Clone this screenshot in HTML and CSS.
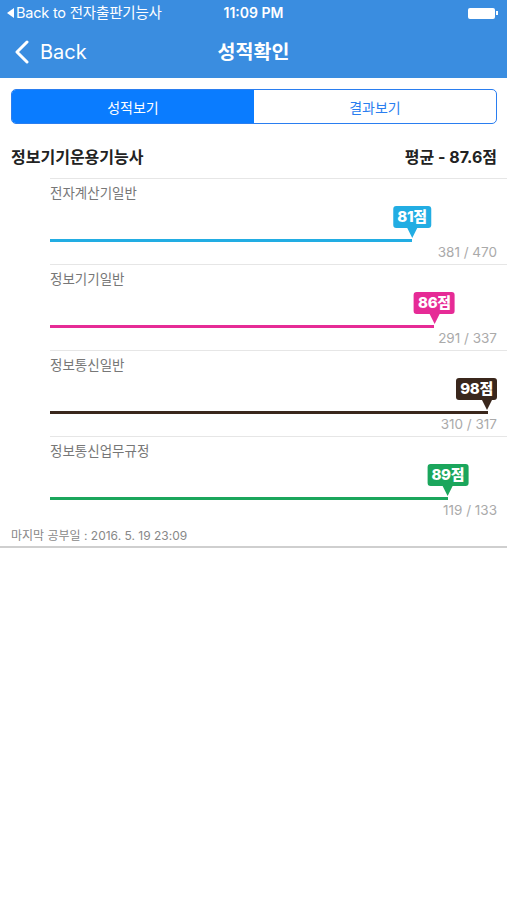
FILE: index.html
```html
<!DOCTYPE html>
<html lang="ko">
<head>
    <meta charset="UTF-8">
    <meta name="viewport" content="width=device-width, initial-scale=1.0">
    <title>성적확인</title>
    <link rel="stylesheet" href="styles.css">
</head>
<body>
    <div class="top">
        <div class="status">
            <div class="status-left"><span class="tri"></span>Back to 전자출판기능사</div>
            <div class="status-time">11:09 PM</div>
            <div class="status-right"><span class="battery"></span><span class="nub"></span></div>
        </div>
        <div class="nav">
            <div class="back">
                <svg width="16" height="24" viewBox="0 0 16 24"><path d="M13 2 L3 12 L13 22" fill="none" stroke="#fff" stroke-width="3" stroke-linecap="round" stroke-linejoin="round"/></svg>
                <span>Back</span>
            </div>
            <div class="title">성적확인</div>
        </div>
    </div>

    <div class="seg">
        <div class="seg-item on">성적보기</div>
        <div class="seg-item">결과보기</div>
    </div>

    <div class="head">
        <div class="head-name">정보기기운용기능사</div>
        <div class="head-avg">평균 - 87.6점</div>
    </div>

    <ul class="list">
        <li class="item c-blue">
            <div class="label">전자계산기일반</div>
            <div class="chart">
                <div class="tip" style="left:81%">81점</div>
                <div class="bar" style="width:81%"></div>
            </div>
            <div class="count">381 / 470</div>
        </li>
        <li class="item c-pink">
            <div class="label">정보기기일반</div>
            <div class="chart">
                <div class="tip" style="left:86%">86점</div>
                <div class="bar" style="width:86%"></div>
            </div>
            <div class="count">291 / 337</div>
        </li>
        <li class="item c-brown">
            <div class="label">정보통신일반</div>
            <div class="chart">
                <div class="tip end">98점</div>
                <div class="bar" style="width:98%"></div>
            </div>
            <div class="count">310 / 317</div>
        </li>
        <li class="item c-green">
            <div class="label">정보통신업무규정</div>
            <div class="chart">
                <div class="tip" style="left:89%">89점</div>
                <div class="bar" style="width:89%"></div>
            </div>
            <div class="count">119 / 133</div>
        </li>
    </ul>

    <div class="foot">마지막 공부일 : 2016. 5. 19 23:09</div>
</body>
</html>
```

FILE: styles.css
```css
*{
    margin:0;
    padding:0;
    list-style:none;
    box-sizing:border-box;
}
body{
    font-family:Inter, "Noto Sans CJK KR", sans-serif;
    background:#fff;
    color:#222;
}
/* 상단 파란 영역 */
.top{
    background:#3a8de0;
    color:#fff;
    height:78px;
}
.status{
    display:flex;
    align-items:center;
    justify-content:space-between;
    height:26px;
    padding:0 9px 0 7px;
    font-size:14.5px;
    line-height:18px;
    position:relative;
}
.status-left{
    display:flex;
    align-items:center;
    letter-spacing:-.2px;
}
.tri{
    width:0;
    height:0;
    border-top:5px solid transparent;
    border-bottom:5px solid transparent;
    border-right:7px solid #fff;
    margin-right:2px;
}
.status-time{
    position:absolute;
    left:0;
    right:0;
    text-align:center;
    font-weight:600;
    font-size:14px;
}
.status-right{
    display:flex;
    align-items:center;
}
.battery{
    width:27px;
    height:11px;
    background:#fff;
    border-radius:2px;
}
.nub{
    width:2px;
    height:4px;
    background:#fff;
    margin-left:1px;
}
.nav{
    height:52px;
    display:flex;
    align-items:center;
    position:relative;
}
.back{
    display:flex;
    align-items:center;
    padding-left:14px;
    font-size:20px;
    line-height:24px;
}
.back svg{
    margin-right:10px;
}
.title{
    position:absolute;
    left:0;
    right:0;
    text-align:center;
    font-size:19.5px;
    line-height:24px;
    font-weight:600;
    pointer-events:none;
}
/* 탭 */
.seg{
    display:flex;
    margin:11px 10px 0 11px;
    height:35px;
    border:1px solid #2a7ef0;
    border-radius:5px;
    overflow:hidden;
}
.seg-item{
    flex:1;
    display:flex;
    align-items:center;
    justify-content:center;
    font-size:14px;
    color:#2a7ef0;
}
.seg-item.on{
    background:#0a7cff;
    color:#fff;
}
/* 과목 헤더 */
.head{
    display:flex;
    justify-content:space-between;
    height:54px;
    padding:23px 10px 0 11px;
    line-height:20px;
    font-weight:700;
    font-size:16px;
}
.list{
    padding-left:50px;
}
.item{
    height:86px;
    border-top:1px solid #e6e6e6;
    padding:6px 10px 0 0;
}
.item:last-child{
    height:85px;
}
.label{
    font-size:13.5px;
    line-height:16px;
    color:#777;
}
.chart{
    position:relative;
    height:41px;
}
.bar{
    position:absolute;
    left:0;
    bottom:0;
    height:3px;
}
.tip{
    position:absolute;
    bottom:14px;
    transform:translateX(-50%);
    height:22px;
    padding:0 4px;
    border-radius:3px;
    color:#fff;
    font-weight:800;
    font-size:15px;
    line-height:22px;
    letter-spacing:-.3px;
}
.tip:after{
    content:"";
    position:absolute;
    top:22px;
    left:50%;
    margin-left:-5px;
    border-left:5px solid transparent;
    border-right:5px solid transparent;
    border-top:10px solid;
    border-top-color:inherit;
}
.tip.end{
    left:auto;
    right:0;
    transform:none;
}
.tip.end:after{
    left:auto;
    right:5px;
    margin-left:0;
}
.count{
    text-align:right;
    font-size:13.5px;
    line-height:16px;
    margin-top:2px;
    color:#aaa;
}
.c-blue .bar,.c-blue .tip{background:#22ade3;border-top-color:#22ade3;}
.c-pink .bar,.c-pink .tip{background:#e62b96;border-top-color:#e62b96;}
.c-brown .bar,.c-brown .tip{background:#3a271c;border-top-color:#3a271c;}
.c-green .bar,.c-green .tip{background:#1ba65c;border-top-color:#1ba65c;}
.foot{
    height:27px;
    padding:8px 0 0 11px;
    font-size:12px;
    line-height:14px;
    color:#888;
    border-bottom:2px solid #cfcfcf;
}
```
